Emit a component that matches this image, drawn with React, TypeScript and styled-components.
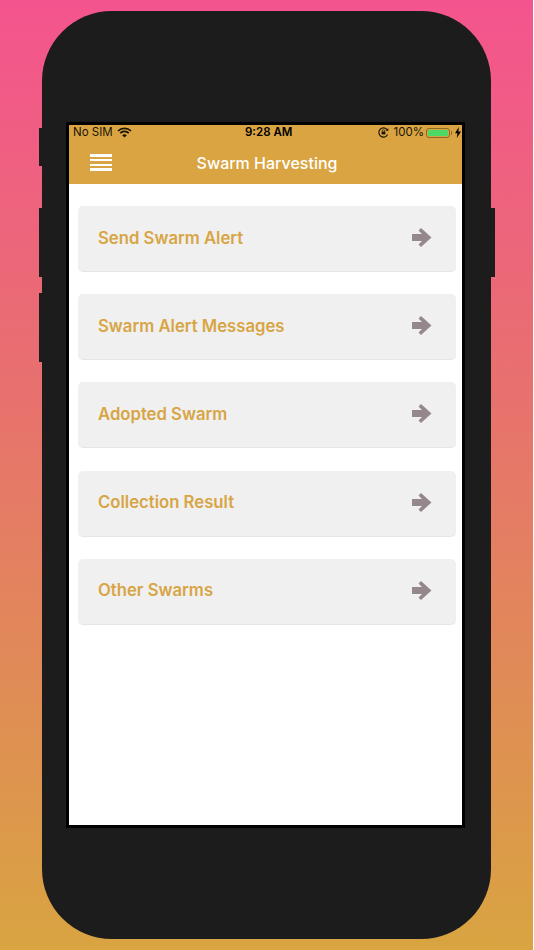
import React from "react";
import styled, { createGlobalStyle } from "styled-components";

const Global = createGlobalStyle`
  html, body { margin: 0; padding: 0; background: #fff; }
  body { font-family: Inter, "Liberation Sans", sans-serif; }
`;

const Page = styled.div`
  width: 533px;
  height: 950px;
  overflow: hidden;
  box-sizing: border-box;
  padding: 11px 42px;
  background: linear-gradient(180deg, #f4548e 0%, #e8706f 40%, #d9a441 100%);
`;

const Device = styled.div`
  position: relative;
  width: 449px;
  height: 928px;
  box-sizing: border-box;
  padding: 111px 2px 0 0;
  display: flex;
  justify-content: center;
  background: #1c1c1c;
  border-radius: 70px;
`;

const SideButton = styled.div<{ $top: number; $height: number; $side: "left" | "right" }>`
  position: absolute;
  top: ${(p) => p.$top}px;
  height: ${(p) => p.$height}px;
  width: 4px;
  background: #1c1c1c;
  ${(p) => (p.$side === "left" ? "left: -3px;" : "right: -4px;")}
`;

const Screen = styled.div`
  width: 393px;
  height: 700px;
  border: 3px solid #000;
  background: #fff;
  display: flex;
  flex-direction: column;
`;

const AppBar = styled.header`
  height: 59px;
  background: #d9a441;
  display: flex;
  flex-direction: column;
  flex: none;
`;

const StatusBar = styled.div`
  height: 15px;
  padding: 0 1px 0 4px;
  display: grid;
  grid-template-columns: 172px auto 1fr;
  align-items: center;
  font-size: 11.5px;
  line-height: 15px;
  color: #1a1407;
`;

const StatusLeft = styled.div`
  display: flex;
  align-items: center;
  gap: 4px;
`;

const StatusTime = styled.div`
  font-weight: 600;
  color: #000;
`;

const StatusRight = styled.div`
  display: flex;
  align-items: center;
  justify-content: flex-end;
`;

const LockSlot = styled.span`
  display: flex;
  margin-right: 5px;
`;

const Percent = styled.span`
  margin-right: 2px;
`;

const BatteryBody = styled.div`
  position: relative;
  width: 20px;
  height: 6px;
  border: 1px solid #8c6a28;
  border-radius: 3px;
  padding: 1px;
  margin-right: 5px;
  &::after {
    content: "";
    position: absolute;
    right: -3px;
    top: 2px;
    width: 1px;
    height: 4px;
    background: #8c6a28;
  }
`;

const BatteryFill = styled.div`
  height: 100%;
  background: #4cd964;
  border-radius: 1px;
`;

const NavRow = styled.div`
  position: relative;
  flex: 1;
  display: flex;
  align-items: center;
  justify-content: center;
  padding: 2px 0 0 3px;
`;

const MenuButton = styled.div`
  position: absolute;
  left: 21px;
  top: 14px;
  width: 22px;
  height: 17px;
  display: flex;
  flex-direction: column;
  justify-content: space-between;
`;

const MenuLine = styled.span`
  display: block;
  height: 2.5px;
  background: #fff;
`;

const Title = styled.h1`
  margin: 0;
  font-size: 16px;
  font-weight: 500;
  color: #fff;
`;

const List = styled.main`
  padding: 22px 6px 0 9px;
  display: flex;
  flex-direction: column;
  gap: 22.2px;
`;

const Row = styled.div`
  height: 66px;
  box-sizing: border-box;
  padding: 0 24px 2px 20px;
  display: flex;
  align-items: center;
  justify-content: space-between;
  background: #f0f0f0;
  border-radius: 5px;
  border-bottom: 1px solid #e6e6e6;
`;

const RowLabel = styled.span`
  font-size: 16.7px;
  font-weight: 600;
  color: #d8a545;
`;

const Arrow = () => (
  <svg width="20" height="19" viewBox="0 0 20 19">
    <path d="M0 6 H10 L6.5 2.5 L9 0 L19.5 9.5 L9 19 L6.5 16.5 L10 13 H0 Z" fill="#95888c" />
  </svg>
);

const Wifi = () => (
  <svg width="15" height="11" viewBox="0 0 15 11">
    <path d="M1 4 A9.2 9.2 0 0 1 14 4" fill="none" stroke="#1a1407" strokeWidth="1.7" />
    <path d="M3.2 6.2 A6 6 0 0 1 11.8 6.2" fill="none" stroke="#1a1407" strokeWidth="1.7" />
    <path d="M5.2 8.2 A3 3 0 0 1 9.8 8.2 L7.5 10.6 Z" fill="#1a1407" />
  </svg>
);

const RotationLock = () => (
  <svg width="11" height="11" viewBox="0 0 11 11">
    <path d="M9.6 7.5 A4.6 4.6 0 1 1 9.2 2.8" fill="none" stroke="#1a1407" strokeWidth="1.1" />
    <path d="M10.4 1.2 L10.2 4.2 L7.6 3.2 Z" fill="#1a1407" />
    <rect x="3.6" y="4.6" width="3.8" height="2.8" fill="#1a1407" />
    <path d="M4.3 4.8 V3.9 A1.2 1.2 0 0 1 6.7 3.9 V4.8" fill="none" stroke="#1a1407" strokeWidth="0.7" />
  </svg>
);

const Bolt = () => (
  <svg width="6" height="11" viewBox="0 0 6 11">
    <path d="M3.8 0 L0 6.2 H2.4 L1.8 11 L6 4.4 H3.4 Z" fill="#000" />
  </svg>
);

const items = [
  "Send Swarm Alert",
  "Swarm Alert Messages",
  "Adopted Swarm",
  "Collection Result",
  "Other Swarms",
];

export default function App() {
  return (
    <>
      <Global />
      <Page>
        <Device>
          <SideButton $side="left" $top={117} $height={38} />
          <SideButton $side="left" $top={197} $height={69} />
          <SideButton $side="left" $top={282} $height={69} />
          <SideButton $side="right" $top={197} $height={69} />
          <Screen>
            <AppBar>
              <StatusBar>
                <StatusLeft>
                  No SIM <Wifi />
                </StatusLeft>
                <StatusTime>9:28 AM</StatusTime>
                <StatusRight>
                  <LockSlot>
                    <RotationLock />
                  </LockSlot>
                  <Percent>100%</Percent>
                  <BatteryBody>
                    <BatteryFill />
                  </BatteryBody>
                  <Bolt />
                </StatusRight>
              </StatusBar>
              <NavRow>
                <MenuButton>
                  <MenuLine />
                  <MenuLine />
                  <MenuLine />
                  <MenuLine />
                </MenuButton>
                <Title>Swarm Harvesting</Title>
              </NavRow>
            </AppBar>
            <List>
              {items.map((label) => (
                <Row key={label}>
                  <RowLabel>{label}</RowLabel>
                  <Arrow />
                </Row>
              ))}
            </List>
          </Screen>
        </Device>
      </Page>
    </>
  );
}
